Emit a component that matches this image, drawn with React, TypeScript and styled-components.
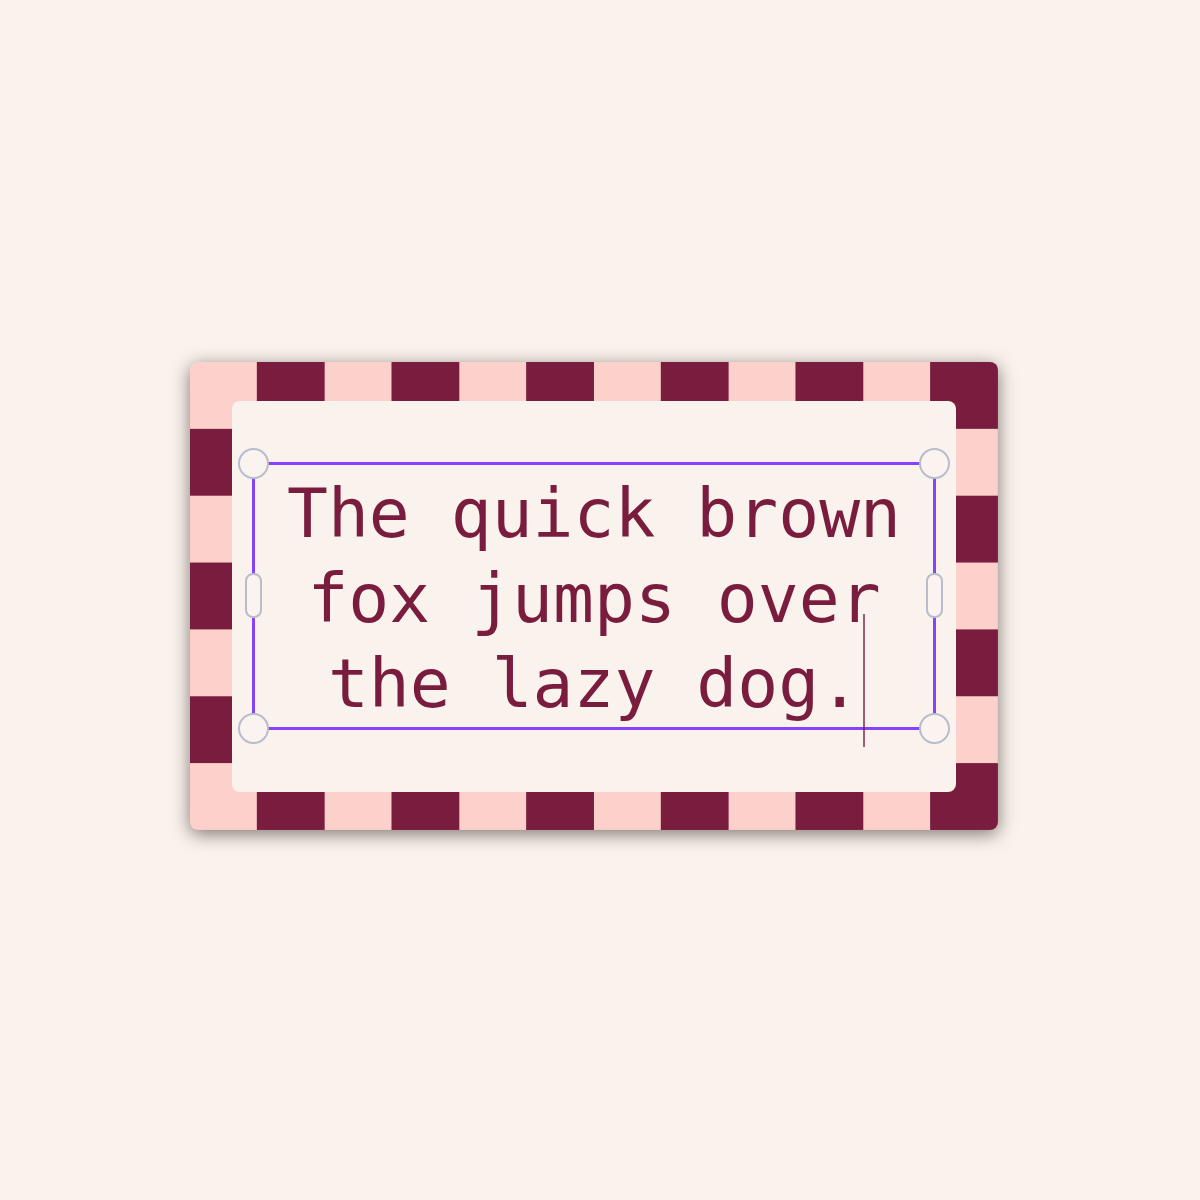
import React from "react";
import styled, { createGlobalStyle } from "styled-components";

const pink = "#fdd1cb";
const wine = "#7a1c3e";
const cream = "#faf2ed";
const violet = "#8742fb";

const GlobalStyle = createGlobalStyle`
  html, body {
    margin: 0;
    padding: 0;
    background: ${cream};
  }
  body {
    font-family: "DejaVu Sans", sans-serif;
  }
`;

const Page = styled.main`
  min-height: 100vh;
  box-sizing: border-box;
  display: flex;
  align-items: center;
  justify-content: center;
  padding: 0 12px 8px 0;
`;

const Card = styled.section`
  width: 808px;
  height: 468px;
  box-sizing: border-box;
  padding: 39px 42px 38px 42px;
  border-radius: 8px;
  display: flex;
  background-color: ${pink};
  background-image: conic-gradient(
    ${wine} 0 25%,
    ${pink} 0 50%,
    ${wine} 0 75%,
    ${pink} 0
  );
  background-size: calc(100% / 6) calc(200% / 7);
  box-shadow: 0 4px 18px rgba(45, 35, 30, 0.6);
`;

const Panel = styled.div`
  flex: 1;
  border-radius: 8px;
  background: #faf2ed;
  display: flex;
  align-items: center;
  justify-content: center;
  padding-bottom: 2px;
`;

const TextBox = styled.div`
  position: relative;
  width: 684px;
  height: 268px;
  box-sizing: border-box;
  border: 3px solid ${violet};
  padding-top: 6px;
  display: flex;
  justify-content: center;
`;

const Words = styled.p`
  margin: 0;
  font-family: "DejaVu Sans Mono", monospace;
  font-size: 68px;
  line-height: 85px;
  color: ${wine};
  text-align: center;
  width: 640px;
`;

const Caret = styled.span`
  position: absolute;
  left: 608px;
  top: 149px;
  width: 1.5px;
  height: 133px;
  background: rgba(122, 28, 62, 0.7);
`;

const CornerHandle = styled.span<{ $x: "left" | "right"; $y: "top" | "bottom" }>`
  position: absolute;
  ${({ $x }) => $x}: -17px;
  ${({ $y }) => $y}: -17px;
  width: 27px;
  height: 27px;
  border-radius: 50%;
  background: #faf3ef;
  border: 2px solid #b9bccb;
`;

const SideHandle = styled.span<{ $x: "left" | "right" }>`
  position: absolute;
  ${({ $x }) => $x}: -10px;
  top: 108px;
  width: 13px;
  height: 41px;
  border-radius: 8px;
  background: #faf3ef;
  border: 2px solid #b9bccb;
`;

export default function App() {
  return (
    <>
      <GlobalStyle />
      <Page>
        <Card>
          <Panel>
            <TextBox>
              <Words>The quick brown fox jumps over the lazy dog.</Words>
              <Caret />
              <CornerHandle $x="left" $y="top" />
              <CornerHandle $x="right" $y="top" />
              <CornerHandle $x="left" $y="bottom" />
              <CornerHandle $x="right" $y="bottom" />
              <SideHandle $x="left" />
              <SideHandle $x="right" />
            </TextBox>
          </Panel>
        </Card>
      </Page>
    </>
  );
}
